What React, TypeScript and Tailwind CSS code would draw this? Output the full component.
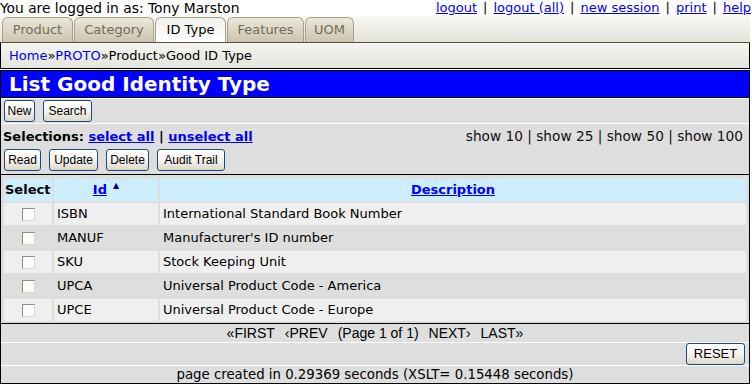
import React from 'react';

const rows = [
  { id: 'ISBN', desc: 'International Standard Book Number' },
  { id: 'MANUF', desc: "Manufacturer's ID number" },
  { id: 'SKU', desc: 'Stock Keeping Unit' },
  { id: 'UPCA', desc: 'Universal Product Code - America' },
  { id: 'UPCE', desc: 'Universal Product Code - Europe' },
];

const tabs = [
  { label: 'Product', w: 'w-[71px]' },
  { label: 'Category', w: 'w-[80px]' },
  { label: 'ID Type', w: 'w-[71px]', active: true },
  { label: 'Features', w: 'w-[77px]' },
  { label: 'UOM', w: 'w-[49px]' },
];

const XpButton: React.FC<{ label: string; w: string }> = ({ label, w }) => (
  <button
    className={`${w} h-[22px] rounded-[3px] border border-[#1c4a7e] bg-gradient-to-b from-white via-[#f5f4ef] to-[#dcd8c8] text-[12px] text-black font-['Liberation_Sans_Narrow','Liberation_Sans',sans-serif] leading-none`}
  >
    {label}
  </button>
);

const Checkbox: React.FC = () => (
  <div className="mx-auto w-[13px] h-[13px] border border-[#8c8c88] border-r-[#d8d8d0] border-b-[#d8d8d0] bg-[#fbfbf5]" />
);

export default function App() {
  return (
    <div className="w-[752px] h-[385px] bg-white text-black text-[13px] font-['DejaVu_Sans',sans-serif] overflow-hidden">
      {/* top line */}
      <div className="flex justify-between items-start h-[16px]">
        <span className="text-[13.8px] leading-[16px] whitespace-nowrap">You are logged in as: Tony Marston</span>
        <div className="flex gap-[6px] text-[13px] leading-[15px] pr-[1px]">
          <a className="text-[#0000ff] underline">logout</a>
          <span>|</span>
          <a className="text-[#0000ff] underline">logout (all)</a>
          <span>|</span>
          <a className="text-[#0000ff] underline">new session</a>
          <span>|</span>
          <a className="text-[#0000ff] underline">print</a>
          <span>|</span>
          <a className="text-[#0000ff] underline">help</a>
        </div>
      </div>

      {/* tabs */}
      <div className="w-[750px] h-[27px] flex items-end gap-[1px] pl-[2px] border-b border-[#5e4e3a] bg-gradient-to-b from-[#f8f8f4] to-[#e4e3da]">
        {tabs.map((t) => (
          <div
            key={t.label}
            className={`${t.w} h-[25px] flex items-center justify-center rounded-t-[6px] border border-b-0 text-[13px] ${
              t.active
                ? 'bg-gradient-to-b from-[#f2f2ec] to-white border-[#a59e88] text-black'
                : 'bg-gradient-to-b from-[#ebe7da] to-[#cbc4b0] border-[#aaa28c] text-[#746b56]'
            }`}
          >
            {t.label}
          </div>
        ))}
      </div>

      {/* breadcrumb */}
      <div className="w-[750px] h-[26px] flex items-center pl-[8px] border-x border-b border-black bg-gradient-to-b from-[#f4f5f0] to-[#e3e5dc] text-[13px]">
        <a className="text-[#0000ff]">Home</a>
        <span>»</span>
        <a className="text-[#0000ff]">PROTO</a>
        <span>»Product»Good ID Type</span>
      </div>

      <div className="h-[1px]" />

      {/* title */}
      <div className="w-[750px] h-[28px] border border-black bg-[#0000ff] flex items-center pl-[8px]">
        <h1 className="text-white font-bold text-[20px] leading-none">List Good Identity Type</h1>
      </div>

      {/* main panel */}
      <div className="w-[750px] border-x border-b border-black bg-[#dedede]">
        <div className="border-t border-white h-[25px] flex items-center gap-[8px] pl-[3px]">
          <XpButton label="New" w="w-[31px]" />
          <XpButton label="Search" w="w-[49px]" />
        </div>

        <div className="border-t border-white h-[26px] flex items-center justify-between pl-[2px] pr-[6px]">
          <div className="text-[13px]">
            <span className="font-bold">Selections: </span>
            <a className="font-bold text-[#0000ff] underline">select all</a>
            <span className="font-bold"> | </span>
            <a className="font-bold text-[#0000ff] underline">unselect all</a>
          </div>
          <div className="text-[13.7px] text-[#111]">show 10 | show 25 | show 50 | show 100</div>
        </div>

        <div className="h-[25px] flex items-start gap-[8px] pl-[3px]">
          <XpButton label="Read" w="w-[37px]" />
          <XpButton label="Update" w="w-[49px]" />
          <XpButton label="Delete" w="w-[43px]" />
          <XpButton label="Audit Trail" w="w-[68px]" />
        </div>

        <div className="border-t border-black px-[1px] pt-[2px]">
          <table className="w-full border-separate border-spacing-[2px] text-[13px]">
            <thead>
              <tr className="h-[22px] bg-[#cceeff]">
                <th className="w-[48px] text-left pl-[1px] font-bold">Select</th>
                <th className="w-[104px] font-bold">
                  <a className="text-[#0000ff] underline">Id</a>
                  <span className="text-[8px] align-top text-[#000080] ml-[6px]">▲</span>
                </th>
                <th className="font-bold">
                  <a className="text-[#0000ff] underline">Description</a>
                </th>
              </tr>
            </thead>
            <tbody>
              {rows.map((r, i) => (
                <tr key={r.id} className={`h-[22px] ${i % 2 === 0 ? 'bg-[#efefef]' : 'bg-[#dedede]'}`}>
                  <td>
                    <Checkbox />
                  </td>
                  <td className="pl-[3px]">{r.id}</td>
                  <td className="pl-[3px]">{r.desc}</td>
                </tr>
              ))}
            </tbody>
          </table>
        </div>

        <div className="border-t border-black h-[19px] flex items-center justify-center font-['Liberation_Sans_Narrow','Liberation_Sans',sans-serif] text-[14px] gap-[10px]">
          <span>«FIRST</span>
          <span>‹PREV</span>
          <span>(Page 1 of 1)</span>
          <span>NEXT›</span>
          <span>LAST»</span>
        </div>

        <div className="border-t border-white h-[23px] flex items-start justify-end pr-[4px]">
          <button className="w-[59px] h-[22px] rounded-[3px] border border-[#1c4a7e] bg-gradient-to-b from-white via-[#f5f4ef] to-[#dcd8c8] text-[13px] font-['Liberation_Sans_Narrow','Liberation_Sans',sans-serif]">
            RESET
          </button>
        </div>

        <div className="border-t border-white h-[18px] flex items-center justify-center text-[13.3px] font-['DejaVu_Sans',sans-serif]">
          page created in 0.29369 seconds (XSLT= 0.15448 seconds)
        </div>
      </div>
    </div>
  );
}
